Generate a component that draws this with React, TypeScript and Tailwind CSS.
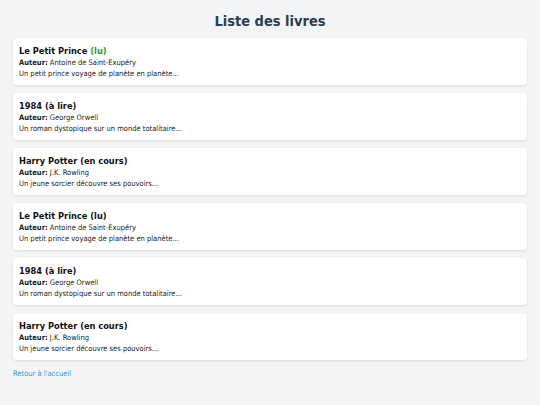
import React from 'react';

interface Book {
  title: string;
  status: string;
  author: string;
  summary: string;
  highlight?: boolean;
}

const books: Book[] = [
  { title: 'Le Petit Prince', status: 'lu', author: 'Antoine de Saint-Exupéry', summary: 'Un petit prince voyage de planète en planète...', highlight: true },
  { title: '1984', status: 'à lire', author: 'George Orwell', summary: 'Un roman dystopique sur un monde totalitaire...' },
  { title: 'Harry Potter', status: 'en cours', author: 'J.K. Rowling', summary: 'Un jeune sorcier découvre ses pouvoirs...' },
  { title: 'Le Petit Prince', status: 'lu', author: 'Antoine de Saint-Exupéry', summary: 'Un petit prince voyage de planète en planète...' },
  { title: '1984', status: 'à lire', author: 'George Orwell', summary: 'Un roman dystopique sur un monde totalitaire...' },
  { title: 'Harry Potter', status: 'en cours', author: 'J.K. Rowling', summary: 'Un jeune sorcier découvre ses pouvoirs...' },
];

const App = () => {
  return (
    <main className="min-h-screen bg-[#f3f4f6] px-[13px] pt-[12px] pb-4 font-['DejaVu_Sans_Condensed','DejaVu_Sans',sans-serif]">
      <h1 className="text-center text-[14.5px] font-bold text-[#2c3e50] leading-[18px] mb-[8px]">Liste des livres</h1>

      <div className="flex flex-col gap-[8px]">
        {books.map((book, i) => (
          <div key={i} className="bg-white rounded-[4px] shadow-[0_1px_3px_rgba(0,0,0,0.1)] px-[6px] pt-[6.5px] h-[47px]">
            <h2 className="text-[9.2px] font-bold text-[#111] leading-[12px] mb-[1.5px]">
              {book.title}{' '}
              <span className={book.highlight ? 'text-[#1f9d2f]' : ''}>({book.status})</span>
            </h2>
            <p className="text-[7.5px] leading-[10.5px] text-[#222]"><strong>Auteur:</strong> {book.author}</p>
            <p className="text-[7.5px] leading-[10.5px] text-[#222]">{book.summary}</p>
          </div>
        ))}
      </div>

      <a href="#" className="block mt-[8px] text-[7.5px] leading-[11px] text-[#3498db]">Retour à l'accueil</a>
    </main>
  );
};

export default App;
